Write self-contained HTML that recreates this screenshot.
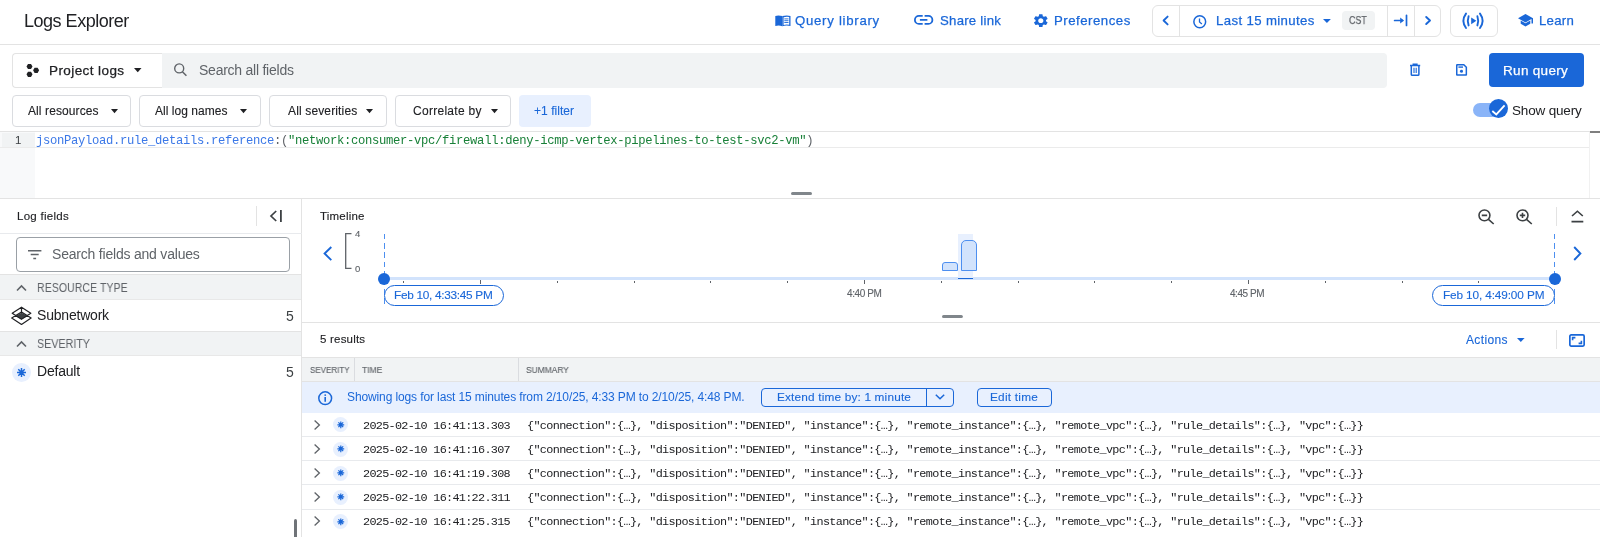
<!DOCTYPE html>
<html><head><meta charset="utf-8">
<style>
*{box-sizing:border-box;margin:0;padding:0}
html,body{-webkit-font-smoothing:antialiased;width:1600px;height:537px;overflow:hidden;background:#fff;font-family:'Liberation Sans',sans-serif;color:#202124;position:relative}
.a{position:absolute}
.t{position:absolute;white-space:nowrap;will-change:transform}
svg{position:absolute;overflow:visible}
</style></head><body>
<div class="a" style="left:0px;top:44px;width:1600px;height:1px;background:#e3e3e3"></div>
<svg style="left:774.8px;top:14.5px;width:15.8px;height:11.5px;" viewBox="0 0 15.8 11.5" preserveAspectRatio="none"><path d="M0.3 0.9Q3.6 -0.2 7.3 1.1V11.2Q3.6 10 0.3 11.1Z" fill="#1a67d8"/><path d="M7.3 1.1Q11.5 -0.2 15.5 0.9V11.1Q11.5 10 7.3 11.2Z" fill="#1a67d8"/><path d="M8.6 2.3Q11.2 1.5 14.2 2V9.7Q11.2 9.2 8.6 9.9Z" fill="#fff"/><path d="M9.3 3.9h4.2M9.3 5.7h4.2M9.3 7.5h4.2" stroke="#1a67d8" stroke-width="0.9"/></svg>
<svg style="left:914px;top:15.2px;width:19.3px;height:9.8px;" viewBox="0 0 19.3 9.8" preserveAspectRatio="none"><path d="M8.7 0.9H4.9a4 4 0 0 0 0 8h3.8M10.6 0.9h3.8a4 4 0 0 1 0 8h-3.8M5.9 4.9h7.5" fill="none" stroke="#1a67d8" stroke-width="1.8"/></svg>
<svg style="left:1034.4px;top:13.75px;width:13.6px;height:13.25px;" viewBox="2.6 2 18.8 20" preserveAspectRatio="none"><path fill="#1a67d8" d="M19.14 12.94c.04-.3.06-.61.06-.94 0-.32-.02-.64-.07-.94l2.03-1.58a.49.49 0 0 0 .12-.61l-1.92-3.32a.488.488 0 0 0-.59-.22l-2.39.96c-.5-.38-1.03-.7-1.62-.94l-.36-2.54a.484.484 0 0 0-.48-.41h-3.84c-.24 0-.43.17-.47.41l-.36 2.54c-.59.24-1.13.57-1.62.94l-2.39-.96c-.22-.08-.47 0-.59.22L2.74 8.87c-.12.21-.08.47.12.61l2.03 1.58c-.05.3-.09.63-.09.94s.02.64.07.94l-2.03 1.58a.49.49 0 0 0-.12.61l1.92 3.32c.12.22.37.29.59.22l2.39-.96c.5.38 1.03.7 1.62.94l.36 2.54c.05.24.24.41.48.41h3.84c.24 0 .44-.17.47-.41l.36-2.54c.59-.24 1.13-.56 1.62-.94l2.39.96c.22.08.47 0 .59-.22l1.92-3.32c.12-.22.07-.47-.12-.61l-2.01-1.58zM12 15.6c-1.98 0-3.6-1.62-3.6-3.6s1.62-3.6 3.6-3.6 3.6 1.62 3.6 3.6-1.62 3.6-3.6 3.6z"/></svg>
<div class="a" style="left:1151.5px;top:5.25px;width:289.5px;height:31.55px;border:1px solid #e3e3e3;border-radius:6px"></div>
<div class="a" style="left:1178.6px;top:5.25px;width:1.0px;height:31.55px;background:#e3e3e3"></div>
<div class="a" style="left:1387px;top:5.25px;width:1px;height:31.55px;background:#e3e3e3"></div>
<div class="a" style="left:1414px;top:5.25px;width:1px;height:31.55px;background:#e3e3e3"></div>
<svg style="left:1160px;top:12px;width:12px;height:18px;" viewBox="0 0 12 18" preserveAspectRatio="none"><path d="M7.6 4.6L3.6 8.5 7.6 12.4" fill="none" stroke="#1a67d8" stroke-width="1.9" stroke-linecap="round" stroke-linejoin="round"/></svg>
<svg style="left:1193px;top:15px;width:13.5px;height:13.5px;" viewBox="0 0 13.5 13.5" preserveAspectRatio="none"><circle cx="6.75" cy="6.75" r="5.9" fill="none" stroke="#1a67d8" stroke-width="1.5"/><path d="M6.5 3.6v3.4l2.4 1.9" fill="none" stroke="#1a67d8" stroke-width="1.3"/></svg>
<svg style="left:1322.75px;top:19.4px;width:7.85px;height:4.1px;" viewBox="0 0 8 4" preserveAspectRatio="none"><path d="M0 0h8L4 4z" fill="#1a67d8"/></svg>
<div class="a" style="left:1341.5px;top:11px;width:33.2px;height:19px;background:#f1f3f4;border-radius:4px"></div>
<svg style="left:1390px;top:12px;width:20px;height:18px;" viewBox="0 0 20 18" preserveAspectRatio="none"><path d="M4.6 8.5H12.5M16.5 3.3V13.4" fill="none" stroke="#1a67d8" stroke-width="1.7" stroke-linecap="round"/><path d="M10.2 5.6L14 8.5 10.2 11.4z" fill="#1a67d8"/></svg>
<svg style="left:1420px;top:12px;width:16px;height:18px;" viewBox="0 0 16 18" preserveAspectRatio="none"><path d="M6.2 5L10 8.5 6.2 12" fill="none" stroke="#1a67d8" stroke-width="1.9" stroke-linecap="round" stroke-linejoin="round"/></svg>
<div class="a" style="left:1449.5px;top:5.3px;width:48.0px;height:31.5px;border:1px solid #e3e3e3;border-radius:6px"></div>
<svg style="left:1460px;top:12px;width:26px;height:18px;" viewBox="0 0 26 18" preserveAspectRatio="none"><path d="M6 1.6Q0.8 8.8 6 16M8.6 4.2Q7 8.8 8.6 13.4M17.4 4.2Q19 8.8 17.4 13.4M20 1.6Q25.2 8.8 20 16" fill="none" stroke="#1a67d8" stroke-width="1.9" stroke-linecap="round"/><path d="M11.2 5.4L16.4 8.8 11.2 12.2z" fill="#1a67d8"/></svg>
<svg style="left:1518px;top:14.3px;width:15px;height:12.7px;" viewBox="0 0 15 12.7" preserveAspectRatio="none"><path d="M7.5 0L0 4.2l7.5 4.2 6-3.4v4.6h1.5V4.2z" fill="#1a67d8"/><path d="M2.7 6.6v3.2L7.5 12.6l4.8-2.8V6.6L7.5 9.3z" fill="#1a67d8"/></svg>
<div class="a" style="left:12.25px;top:52.6px;width:150.75px;height:35.2px;border:1px solid #e3e3e3;border-right:none;border-radius:4px 0 0 4px"></div>
<div class="a" style="left:162.3px;top:52.6px;width:1224.7px;height:35.2px;background:#f1f3f4;border-radius:0 4px 4px 0"></div>
<svg style="left:20px;top:58px;width:30px;height:24px;" viewBox="0 0 30 24" preserveAspectRatio="none"><path d="M6.50 8.50L8.00 5.90L11.00 5.90L12.50 8.50L11.00 11.10L8.00 11.10ZM13.10 12.30L14.60 9.70L17.60 9.70L19.10 12.30L17.60 14.90L14.60 14.90ZM6.50 16.30L8.00 13.70L11.00 13.70L12.50 16.30L11.00 18.90L8.00 18.90Z" fill="#202124"/></svg>
<svg style="left:133.75px;top:68.2px;width:7.5px;height:4.3px;" viewBox="0 0 7.5 4.3" preserveAspectRatio="none"><path d="M0 0h7.5L3.75 4.3z" fill="#202124"/></svg>
<svg style="left:173px;top:62px;width:15px;height:16px;" viewBox="0 0 15 16" preserveAspectRatio="none"><circle cx="6.2" cy="6.4" r="4.5" fill="none" stroke="#5f6368" stroke-width="1.4"/><path d="M9.4 9.7l4 4.1" stroke="#5f6368" stroke-width="1.5"/></svg>
<svg style="left:1409.7px;top:64.2px;width:10.2px;height:11.7px;" viewBox="0 0 10.2 11.7" preserveAspectRatio="none"><path d="M0 1.5h10.2M3.3 1.2V0.3h3.6v0.9" stroke="#1a67d8" stroke-width="1.5" fill="none"/><path d="M1.3 2v8.4a0.9 0.9 0 0 0 .9.9h5.8a0.9 0.9 0 0 0 .9-.9V2" fill="none" stroke="#1a67d8" stroke-width="1.5"/><path d="M4 3.8v5.2M6.2 3.8v5.2" stroke="#1a67d8" stroke-width="1.1"/></svg>
<svg style="left:1455.9px;top:64.2px;width:11.1px;height:11.7px;" viewBox="0 0 11.1 11.7" preserveAspectRatio="none"><path d="M1 0.75h6.8l2.55 2.55v7.4a0.3 0.3 0 0 1-.3.3H1.05a0.3 0.3 0 0 1-.3-.3V1.05a0.3 0.3 0 0 1 .3-.3z" fill="none" stroke="#1a67d8" stroke-width="1.5"/><rect x="2.4" y="2.4" width="4.6" height="1.4" fill="#1a67d8"/><circle cx="5.5" cy="7.3" r="1.5" fill="#1a67d8"/></svg>
<div class="a" style="left:1489px;top:52.75px;width:95px;height:34.45px;background:#1a67d8;border-radius:4px"></div>
<div class="a" style="left:12.25px;top:95.4px;width:118.35px;height:31.3px;border:1px solid #dadce0;border-radius:4px"></div>
<div class="a" style="left:139.4px;top:95.4px;width:121.3px;height:31.3px;border:1px solid #dadce0;border-radius:4px"></div>
<div class="a" style="left:268.5px;top:95.4px;width:118.4px;height:31.3px;border:1px solid #dadce0;border-radius:4px"></div>
<div class="a" style="left:394.5px;top:95.4px;width:116.2px;height:31.3px;border:1px solid #dadce0;border-radius:4px"></div>
<div class="a" style="left:518.8px;top:95.4px;width:72.1px;height:31.3px;background:#e8f0fe;border-radius:4px"></div>
<svg style="left:110.9px;top:108.9px;width:7.0px;height:4.3px;" viewBox="0 0 7 4.3" preserveAspectRatio="none"><path d="M0 0h7L3.5 4.3z" fill="#202124"/></svg>
<svg style="left:240.3px;top:108.9px;width:7.0px;height:4.3px;" viewBox="0 0 7 4.3" preserveAspectRatio="none"><path d="M0 0h7L3.5 4.3z" fill="#202124"/></svg>
<svg style="left:366.2px;top:108.9px;width:7.0px;height:4.3px;" viewBox="0 0 7 4.3" preserveAspectRatio="none"><path d="M0 0h7L3.5 4.3z" fill="#202124"/></svg>
<svg style="left:490.6px;top:108.9px;width:7.0px;height:4.3px;" viewBox="0 0 7 4.3" preserveAspectRatio="none"><path d="M0 0h7L3.5 4.3z" fill="#202124"/></svg>
<div class="a" style="left:1473px;top:102.5px;width:27px;height:14.0px;background:#8ab4f8;border-radius:7px"></div>
<div class="a" style="left:1488.6px;top:99.2px;width:19px;height:19px;border-radius:50%;background:#1a67d8"></div>
<svg style="left:1490px;top:103px;width:16px;height:13px;" viewBox="0 0 16 13" preserveAspectRatio="none"><path d="M2.3 8L6.3 11.4 14.6 2.3" fill="none" stroke="#fff" stroke-width="1.8"/></svg>
<div class="a" style="left:0px;top:131px;width:1600px;height:1.3px;background:#e3e3e3"></div>
<div class="a" style="left:0px;top:132.3px;width:35px;height:65.7px;background:#f8f9fa"></div>
<div class="a" style="left:2px;top:133px;width:33px;height:13.5px;background:#f1f3f4"></div>
<div class="a" style="left:0px;top:146.6px;width:1589px;height:1.4px;background:#ebebeb"></div>
<div class="a" style="left:1589px;top:132px;width:1px;height:66px;background:#f1f1f1"></div>
<div class="a" style="left:1590px;top:131px;width:10px;height:2px;background:#7f7f7f"></div>
<div class="t" style="left:36.2px;top:135px;font-family:'Liberation Mono',monospace;font-size:12.2px;line-height:12.2px;letter-spacing:-0.312px;white-space:pre"><span style="color:#3b78e7">jsonPayload.rule_details.reference</span><span style="color:#5f6368">:(</span><span style="color:#188038">"network:consumer-vpc/firewall:deny-icmp-vertex-pipelines-to-test-svc2-vm"</span><span style="color:#5f6368">)</span></div>
<div class="a" style="left:791px;top:191.5px;width:21px;height:3.0px;background:#80868b;border-radius:2px"></div>
<div class="a" style="left:0px;top:198px;width:1600px;height:1px;background:#e3e3e3"></div>
<div class="a" style="left:301px;top:199px;width:1px;height:338px;background:#e3e3e3"></div>
<div class="a" style="left:256.2px;top:206px;width:1.0px;height:19.6px;background:#e3e3e3"></div>
<svg style="left:268px;top:208px;width:16px;height:16px;" viewBox="0 0 16 16" preserveAspectRatio="none"><path d="M8.2 3L3 8 8.2 13" fill="none" stroke="#3c4043" stroke-width="1.7"/><path d="M12.9 2v12" stroke="#3c4043" stroke-width="1.8"/></svg>
<div class="a" style="left:0px;top:233px;width:302px;height:1px;background:#e8eaed"></div>
<div class="a" style="left:16px;top:237.2px;width:273.5px;height:34.8px;border:1px solid #9aa0a6;border-radius:4px"></div>
<svg style="left:27.6px;top:250px;width:13.4px;height:9.2px;" viewBox="0 0 13.4 9.2" preserveAspectRatio="none"><path d="M0 0.8h13.4M2.7 4.6h8M5.3 8.4h2.8" stroke="#5f6368" stroke-width="1.5"/></svg>
<div class="a" style="left:0px;top:274px;width:301px;height:25.5px;background:#f1f3f4;border-top:1px solid #e3e3e3;border-bottom:1px solid #e8e8e8"></div>
<div class="a" style="left:0px;top:330.5px;width:301px;height:25.6px;background:#f1f3f4;border-top:1px solid #e3e3e3;border-bottom:1px solid #e8e8e8"></div>
<svg style="left:16px;top:284.5px;width:11px;height:6.1px;" viewBox="0 0 11 6.1" preserveAspectRatio="none"><path d="M1 5.5L5.5 1 10 5.5" fill="none" stroke="#5f6368" stroke-width="1.6"/></svg>
<svg style="left:16px;top:341px;width:11px;height:6.1px;" viewBox="0 0 11 6.1" preserveAspectRatio="none"><path d="M1 5.5L5.5 1 10 5.5" fill="none" stroke="#5f6368" stroke-width="1.6"/></svg>
<svg style="left:10px;top:305px;width:22px;height:21px;" viewBox="0 0 22 21" preserveAspectRatio="none"><path d="M11.50 7.80 L17.80 10.90 L11.50 14.30 L5.20 10.90z" fill="#3c4043"/><path d="M11.50 2.20 L20.80 8.30 L11.50 14.30 L2.20 8.30zM11.50 6.90 L21.10 13.10 L11.50 19.40 L1.70 13.10zM11.5 2.2V8" fill="none" stroke="#202124" stroke-width="1.2" stroke-linejoin="round"/></svg>
<div class="a" style="left:11.6px;top:362.5px;width:19.4px;height:19.4px;border-radius:50%;background:#e8f0fe"></div>
<svg style="left:15.8px;top:366.7px;width:11.0px;height:11.0px;" viewBox="0 0 11 11" preserveAspectRatio="none"><path d="M5.5 1v9M1 5.5h9M2.3 2.3l6.4 6.4M2.3 8.7l6.4-6.4" stroke="#1a67d8" stroke-width="1.5"/><circle cx="5.5" cy="5.5" r="1.6" fill="#1a67d8"/></svg>
<div class="a" style="left:293.8px;top:518.7px;width:3.2px;height:21.3px;background:#6f7378;border-radius:2px"></div>
<svg style="left:322.8px;top:245.8px;width:9.5px;height:15.1px;" viewBox="0 0 9.5 15.1" preserveAspectRatio="none"><path d="M8.3 1L1.6 7.55 8.3 14.1" fill="none" stroke="#1a67d8" stroke-width="1.9"/></svg>
<svg style="left:344.6px;top:232.8px;width:6.9px;height:35.9px;" viewBox="0 0 6.9 35.9" preserveAspectRatio="none"><path d="M6.5 0.6H0.7V35.3H6.5" fill="none" stroke="#5f6368" stroke-width="1.3"/></svg>
<div class="a" style="left:384px;top:276.7px;width:1170.7px;height:3.4px;background:#d2e3fc"></div>
<div class="a" style="left:403.2px;top:281.2px;width:1.1px;height:2.0px;background:#5f6368"></div>
<div class="a" style="left:480.0px;top:280.3px;width:1.1px;height:3.9px;background:#5f6368"></div>
<div class="a" style="left:556.8px;top:281.2px;width:1.1px;height:2.0px;background:#5f6368"></div>
<div class="a" style="left:633.6px;top:281.2px;width:1.1px;height:2.0px;background:#5f6368"></div>
<div class="a" style="left:710.4px;top:281.2px;width:1.1px;height:2.0px;background:#5f6368"></div>
<div class="a" style="left:787.2px;top:281.2px;width:1.1px;height:2.0px;background:#5f6368"></div>
<div class="a" style="left:864.0px;top:280.3px;width:1.1px;height:3.9px;background:#5f6368"></div>
<div class="a" style="left:940.8px;top:281.2px;width:1.1px;height:2.0px;background:#5f6368"></div>
<div class="a" style="left:1017.6px;top:281.2px;width:1.1px;height:2.0px;background:#5f6368"></div>
<div class="a" style="left:1094.4px;top:281.2px;width:1.1px;height:2.0px;background:#5f6368"></div>
<div class="a" style="left:1171.1999999999998px;top:281.2px;width:1.1px;height:2.0px;background:#5f6368"></div>
<div class="a" style="left:1248.0px;top:280.3px;width:1.1px;height:3.9px;background:#5f6368"></div>
<div class="a" style="left:1324.8px;top:281.2px;width:1.1px;height:2.0px;background:#5f6368"></div>
<div class="a" style="left:1401.6px;top:281.2px;width:1.1px;height:2.0px;background:#5f6368"></div>
<div class="a" style="left:1478.4px;top:281.2px;width:1.1px;height:2.0px;background:#5f6368"></div>
<div class="a" style="left:957.5px;top:234px;width:15.1px;height:44px;background:#e8f0fe"></div>
<div class="a" style="left:957.5px;top:277.5px;width:15.1px;height:1.7px;background:#1a67d8"></div>
<div class="a" style="left:942px;top:262.3px;width:15.5px;height:8.3px;background:#d2e3fc;border:1.2px solid #4d8ff0;border-radius:3px 3px 0 0"></div>
<div class="a" style="left:961.3px;top:239.5px;width:15.8px;height:31.1px;background:#d2e3fc;border:1.2px solid #4d8ff0;border-radius:5px 5px 0 0"></div>
<div class="a" style="left:383.55px;top:234px;width:1.3px;height:72px;background:repeating-linear-gradient(to bottom,#4d8ff0 0 5.4px,transparent 5.4px 9.2px)"></div>
<div class="a" style="left:1554.05px;top:234px;width:1.3px;height:72px;background:repeating-linear-gradient(to bottom,#4d8ff0 0 5.4px,transparent 5.4px 9.2px)"></div>
<div class="a" style="left:383.9px;top:284.8px;width:119.8px;height:20.9px;background:#fff;border:1.2px solid #1a67d8;border-radius:11px"></div>
<div class="a" style="left:1432.2px;top:284.7px;width:122.8px;height:21.1px;background:#fff;border:1.2px solid #1a67d8;border-radius:11px"></div>
<div class="a" style="left:378.2px;top:272.5px;width:12px;height:12px;border-radius:50%;background:#1a67d8"></div>
<div class="a" style="left:1548.7px;top:272.5px;width:12px;height:12px;border-radius:50%;background:#1a67d8"></div>
<svg style="left:1477.5px;top:209px;width:16.9px;height:15.7px;" viewBox="0 0 17 16" preserveAspectRatio="none"><circle cx="6.5" cy="6.5" r="5.5" fill="none" stroke="#3c4043" stroke-width="1.6"/><path d="M10.5 10.5l5.3 4.8M3.8 6.5h5.4" stroke="#3c4043" stroke-width="1.6"/></svg>
<svg style="left:1516px;top:209px;width:17px;height:15.7px;" viewBox="0 0 17 16" preserveAspectRatio="none"><circle cx="6.5" cy="6.5" r="5.5" fill="none" stroke="#3c4043" stroke-width="1.6"/><path d="M10.5 10.5l5.3 4.8M3.8 6.5h5.4M6.5 3.8v5.4" stroke="#3c4043" stroke-width="1.6"/></svg>
<div class="a" style="left:1555.5px;top:207px;width:1.0px;height:19px;background:#e3e3e3"></div>
<svg style="left:1571px;top:210px;width:12.75px;height:12.5px;" viewBox="0 0 12.75 12.5" preserveAspectRatio="none"><path d="M1 6L6.4 1.2 11.8 6M0.5 11.6h11.8" fill="none" stroke="#3c4043" stroke-width="1.6"/></svg>
<svg style="left:1572.5px;top:245.6px;width:8.5px;height:15.0px;" viewBox="0 0 8.5 15" preserveAspectRatio="none"><path d="M1.2 1L7.4 7.5 1.2 14" fill="none" stroke="#1a67d8" stroke-width="1.9"/></svg>
<svg style="left:941.7px;top:314.8px;width:20.9px;height:3.0px;" viewBox="0 0 21 3" preserveAspectRatio="none"><rect x="0" y="0" width="21" height="3" rx="1.5" fill="#80868b"/></svg>
<div class="a" style="left:302px;top:322px;width:1298px;height:1px;background:#e3e3e3"></div>
<svg style="left:1516.6px;top:337.8px;width:7.6px;height:4.1px;" viewBox="0 0 7.6 4.1" preserveAspectRatio="none"><path d="M0 0h7.6L3.8 4.1z" fill="#1a67d8"/></svg>
<div class="a" style="left:1556px;top:330px;width:1px;height:18.8px;background:#e3e3e3"></div>
<svg style="left:1569px;top:334px;width:16px;height:13px;" viewBox="0 0 16 13" preserveAspectRatio="none"><rect x="0.85" y="0.85" width="14.3" height="11.3" rx="1.3" fill="none" stroke="#1a67d8" stroke-width="1.7"/><path d="M3.6 6.2V3.6h2.8M12.4 6.8v2.6H9.6" fill="none" stroke="#1a67d8" stroke-width="1.6"/></svg>
<div class="a" style="left:302px;top:357px;width:1298px;height:25px;background:#f1f3f4;border-top:1px solid #e3e3e3;border-bottom:1px solid #e3e3e3"></div>
<div class="a" style="left:354.2px;top:358px;width:1.0px;height:23px;background:#dadce0"></div>
<div class="a" style="left:518px;top:358px;width:1px;height:23px;background:#dadce0"></div>
<div class="a" style="left:302px;top:381.6px;width:1298px;height:31.4px;background:#e8f0fe"></div>
<svg style="left:317.9px;top:390.5px;width:14.4px;height:14.4px;" viewBox="0 0 14.4 14.4" preserveAspectRatio="none"><circle cx="7.2" cy="7.2" r="6.4" fill="none" stroke="#1a67d8" stroke-width="1.5"/><path d="M7.2 6v4.8" stroke="#1a67d8" stroke-width="1.6"/><circle cx="7.2" cy="4.1" r="0.9" fill="#1a67d8"/></svg>
<div class="a" style="left:761px;top:388px;width:192.6px;height:18.6px;border:1px solid #1a67d8;border-radius:4px"></div>
<div class="a" style="left:926px;top:388px;width:1px;height:18.6px;background:#1a67d8"></div>
<svg style="left:935px;top:394.4px;width:10px;height:5.6px;" viewBox="0 0 10 5.6" preserveAspectRatio="none"><path d="M0.8 0.8L5 4.8 9.2 0.8" fill="none" stroke="#1a67d8" stroke-width="1.5"/></svg>
<div class="a" style="left:977px;top:388px;width:74.6px;height:18.6px;border:1px solid #1a67d8;border-radius:4px"></div>
<div class="a" style="left:302px;top:436.2px;width:1298px;height:1.0px;background:#e8eaed"></div>
<svg style="left:313px;top:419.0px;width:9px;height:12.0px;" viewBox="0 0 9 12" preserveAspectRatio="none"><path d="M1.6 1.5L6.4 6 1.6 10.5" fill="none" stroke="#5f6368" stroke-width="1.3"/></svg>
<div class="a" style="left:332.7px;top:417.4px;width:15px;height:15px;border-radius:50%;background:#e8f0fe"></div>
<svg style="left:337px;top:421.1px;width:7.6px;height:7.6px;" viewBox="0 0 7.6 7.6" preserveAspectRatio="none"><path d="M3.8 0.4v6.8M0.4 3.8h6.8M1.4 1.4l4.8 4.8M1.4 6.2l4.8-4.8" stroke="#1a67d8" stroke-width="1.2"/><circle cx="3.8" cy="3.8" r="1.5" fill="#1a67d8"/></svg>
<div class="a" style="left:302px;top:460.3px;width:1298px;height:1.0px;background:#e8eaed"></div>
<svg style="left:313px;top:443.1px;width:9px;height:12.0px;" viewBox="0 0 9 12" preserveAspectRatio="none"><path d="M1.6 1.5L6.4 6 1.6 10.5" fill="none" stroke="#5f6368" stroke-width="1.3"/></svg>
<div class="a" style="left:332.7px;top:441.5px;width:15px;height:15px;border-radius:50%;background:#e8f0fe"></div>
<svg style="left:337px;top:445.20000000000005px;width:7.6px;height:7.6px;" viewBox="0 0 7.6 7.6" preserveAspectRatio="none"><path d="M3.8 0.4v6.8M0.4 3.8h6.8M1.4 1.4l4.8 4.8M1.4 6.2l4.8-4.8" stroke="#1a67d8" stroke-width="1.2"/><circle cx="3.8" cy="3.8" r="1.5" fill="#1a67d8"/></svg>
<div class="a" style="left:302px;top:484.4px;width:1298px;height:1.0px;background:#e8eaed"></div>
<svg style="left:313px;top:467.2px;width:9px;height:12.0px;" viewBox="0 0 9 12" preserveAspectRatio="none"><path d="M1.6 1.5L6.4 6 1.6 10.5" fill="none" stroke="#5f6368" stroke-width="1.3"/></svg>
<div class="a" style="left:332.7px;top:465.59999999999997px;width:15px;height:15px;border-radius:50%;background:#e8f0fe"></div>
<svg style="left:337px;top:469.3px;width:7.6px;height:7.6px;" viewBox="0 0 7.6 7.6" preserveAspectRatio="none"><path d="M3.8 0.4v6.8M0.4 3.8h6.8M1.4 1.4l4.8 4.8M1.4 6.2l4.8-4.8" stroke="#1a67d8" stroke-width="1.2"/><circle cx="3.8" cy="3.8" r="1.5" fill="#1a67d8"/></svg>
<div class="a" style="left:302px;top:508.5px;width:1298px;height:1.0px;background:#e8eaed"></div>
<svg style="left:313px;top:491.3px;width:9px;height:12.0px;" viewBox="0 0 9 12" preserveAspectRatio="none"><path d="M1.6 1.5L6.4 6 1.6 10.5" fill="none" stroke="#5f6368" stroke-width="1.3"/></svg>
<div class="a" style="left:332.7px;top:489.7px;width:15px;height:15px;border-radius:50%;background:#e8f0fe"></div>
<svg style="left:337px;top:493.40000000000003px;width:7.6px;height:7.6px;" viewBox="0 0 7.6 7.6" preserveAspectRatio="none"><path d="M3.8 0.4v6.8M0.4 3.8h6.8M1.4 1.4l4.8 4.8M1.4 6.2l4.8-4.8" stroke="#1a67d8" stroke-width="1.2"/><circle cx="3.8" cy="3.8" r="1.5" fill="#1a67d8"/></svg>
<svg style="left:313px;top:515.4px;width:9px;height:12.0px;" viewBox="0 0 9 12" preserveAspectRatio="none"><path d="M1.6 1.5L6.4 6 1.6 10.5" fill="none" stroke="#5f6368" stroke-width="1.3"/></svg>
<div class="a" style="left:332.7px;top:513.8px;width:15px;height:15px;border-radius:50%;background:#e8f0fe"></div>
<svg style="left:337px;top:517.5px;width:7.6px;height:7.6px;" viewBox="0 0 7.6 7.6" preserveAspectRatio="none"><path d="M3.8 0.4v6.8M0.4 3.8h6.8M1.4 1.4l4.8 4.8M1.4 6.2l4.8-4.8" stroke="#1a67d8" stroke-width="1.2"/><circle cx="3.8" cy="3.8" r="1.5" fill="#1a67d8"/></svg>
<div class="t" style="left:23.8px;top:12px;font-size:18px;line-height:18px;color:#202124;font-weight:400;font-family:'Liberation Sans',sans-serif;letter-spacing:-0.485px;">Logs Explorer</div>
<div class="t" style="left:795.2px;top:14px;font-size:13.2px;line-height:13.2px;color:#1a67d8;font-weight:400;font-family:'Liberation Sans',sans-serif;letter-spacing:0.722px;-webkit-text-stroke:0.25px #1a67d8;">Query library</div>
<div class="t" style="left:939.5px;top:14px;font-size:13.2px;line-height:13.2px;color:#1a67d8;font-weight:400;font-family:'Liberation Sans',sans-serif;letter-spacing:0.248px;-webkit-text-stroke:0.25px #1a67d8;">Share link</div>
<div class="t" style="left:1054.25px;top:14px;font-size:13.2px;line-height:13.2px;color:#1a67d8;font-weight:400;font-family:'Liberation Sans',sans-serif;letter-spacing:0.514px;-webkit-text-stroke:0.25px #1a67d8;">Preferences</div>
<div class="t" style="left:1216.0px;top:14px;font-size:13.2px;line-height:13.2px;color:#1a67d8;font-weight:400;font-family:'Liberation Sans',sans-serif;letter-spacing:0.373px;-webkit-text-stroke:0.25px #1a67d8;">Last 15 minutes</div>
<div class="t" style="left:1348.5px;top:15px;font-size:10.5px;line-height:10.5px;color:#5f6368;font-weight:400;font-family:'Liberation Sans',sans-serif;letter-spacing:0px;-webkit-text-stroke:0.25px #5f6368;transform:scaleX(0.8476);transform-origin:0 0;">CST</div>
<div class="t" style="left:1538.7px;top:14px;font-size:13.2px;line-height:13.2px;color:#1a67d8;font-weight:400;font-family:'Liberation Sans',sans-serif;letter-spacing:0.283px;-webkit-text-stroke:0.25px #1a67d8;">Learn</div>
<div class="t" style="left:48.9px;top:64px;font-size:13.5px;line-height:13.5px;color:#202124;font-weight:400;font-family:'Liberation Sans',sans-serif;letter-spacing:0.415px;-webkit-text-stroke:0.25px #202124;">Project logs</div>
<div class="t" style="left:199.25px;top:63px;font-size:14px;line-height:14px;color:#5f6368;font-weight:400;font-family:'Liberation Sans',sans-serif;letter-spacing:-0.244px;">Search all fields</div>
<div class="t" style="left:1503.4px;top:64px;font-size:13.5px;line-height:13.5px;color:#ffffff;font-weight:400;font-family:'Liberation Sans',sans-serif;letter-spacing:0.319px;-webkit-text-stroke:0.25px #ffffff;">Run query</div>
<div class="t" style="left:27.9px;top:105px;font-size:12px;line-height:12px;color:#202124;font-weight:400;font-family:'Liberation Sans',sans-serif;letter-spacing:0.099px;-webkit-text-stroke:0.12px #202124;">All resources</div>
<div class="t" style="left:155.4px;top:105px;font-size:12px;line-height:12px;color:#202124;font-weight:400;font-family:'Liberation Sans',sans-serif;letter-spacing:0.037px;-webkit-text-stroke:0.12px #202124;">All log names</div>
<div class="t" style="left:287.5px;top:105px;font-size:12px;line-height:12px;color:#202124;font-weight:400;font-family:'Liberation Sans',sans-serif;letter-spacing:0.144px;-webkit-text-stroke:0.12px #202124;">All severities</div>
<div class="t" style="left:412.9px;top:105px;font-size:12px;line-height:12px;color:#202124;font-weight:400;font-family:'Liberation Sans',sans-serif;letter-spacing:0.282px;-webkit-text-stroke:0.12px #202124;">Correlate by</div>
<div class="t" style="left:534.25px;top:105px;font-size:12px;line-height:12px;color:#1a67d8;font-weight:400;font-family:'Liberation Sans',sans-serif;letter-spacing:0.049px;-webkit-text-stroke:0.12px #1a67d8;">+1 filter</div>
<div class="t" style="left:1511.8px;top:104px;font-size:13.5px;line-height:13.5px;color:#202124;font-weight:400;font-family:'Liberation Sans',sans-serif;letter-spacing:-0.167px;">Show query</div>
<div class="t" style="left:14.8px;top:135px;font-size:11.5px;line-height:11.5px;color:#3c4043;font-weight:400;font-family:'Liberation Sans',sans-serif;letter-spacing:0px;">1</div>
<div class="t" style="left:17.2px;top:211px;font-size:11.5px;line-height:11.5px;color:#202124;font-weight:400;font-family:'Liberation Sans',sans-serif;letter-spacing:0.271px;-webkit-text-stroke:0.12px #202124;">Log fields</div>
<div class="t" style="left:52.2px;top:247px;font-size:14px;line-height:14px;color:#5f6368;font-weight:400;font-family:'Liberation Sans',sans-serif;letter-spacing:-0.206px;">Search fields and values</div>
<div class="t" style="left:36.5px;top:282px;font-size:12px;line-height:12px;color:#5f6368;font-weight:400;font-family:'Liberation Sans',sans-serif;letter-spacing:0px;transform:scaleX(0.8843);transform-origin:0 0;">RESOURCE TYPE</div>
<div class="t" style="left:36.5px;top:338px;font-size:12px;line-height:12px;color:#5f6368;font-weight:400;font-family:'Liberation Sans',sans-serif;letter-spacing:0px;transform:scaleX(0.893);transform-origin:0 0;">SEVERITY</div>
<div class="t" style="left:36.5px;top:308px;font-size:14px;line-height:14px;color:#202124;font-weight:400;font-family:'Liberation Sans',sans-serif;letter-spacing:-0.203px;">Subnetwork</div>
<div class="t" style="left:286.3px;top:309px;font-size:14px;line-height:14px;color:#3c4043;font-weight:400;font-family:'Liberation Sans',sans-serif;letter-spacing:0px;">5</div>
<div class="t" style="left:36.5px;top:364px;font-size:14px;line-height:14px;color:#202124;font-weight:400;font-family:'Liberation Sans',sans-serif;letter-spacing:-0.209px;">Default</div>
<div class="t" style="left:286.3px;top:365px;font-size:14px;line-height:14px;color:#3c4043;font-weight:400;font-family:'Liberation Sans',sans-serif;letter-spacing:0px;">5</div>
<div class="t" style="left:319.8px;top:211px;font-size:11.5px;line-height:11.5px;color:#202124;font-weight:400;font-family:'Liberation Sans',sans-serif;letter-spacing:0.209px;-webkit-text-stroke:0.12px #202124;">Timeline</div>
<div class="t" style="left:354.9px;top:229px;font-size:9.5px;line-height:9.5px;color:#5f6368;font-weight:400;font-family:'Liberation Sans',sans-serif;letter-spacing:0px;-webkit-text-stroke:0.12px #5f6368;">4</div>
<div class="t" style="left:354.9px;top:264px;font-size:9.5px;line-height:9.5px;color:#5f6368;font-weight:400;font-family:'Liberation Sans',sans-serif;letter-spacing:0px;-webkit-text-stroke:0.12px #5f6368;">0</div>
<div class="t" style="left:846.5px;top:289px;font-size:10px;line-height:10px;color:#5f6368;font-weight:400;font-family:'Liberation Sans',sans-serif;letter-spacing:-0.391px;-webkit-text-stroke:0.12px #5f6368;">4:40 PM</div>
<div class="t" style="left:1230.1px;top:289px;font-size:10px;line-height:10px;color:#5f6368;font-weight:400;font-family:'Liberation Sans',sans-serif;letter-spacing:-0.437px;-webkit-text-stroke:0.12px #5f6368;">4:45 PM</div>
<div class="t" style="left:394.0px;top:290px;font-size:11.8px;line-height:11.8px;color:#1a67d8;font-weight:400;font-family:'Liberation Sans',sans-serif;letter-spacing:-0.287px;-webkit-text-stroke:0.12px #1a67d8;">Feb 10, 4:33:45 PM</div>
<div class="t" style="left:1442.5px;top:290px;font-size:11.8px;line-height:11.8px;color:#1a67d8;font-weight:400;font-family:'Liberation Sans',sans-serif;letter-spacing:-0.127px;-webkit-text-stroke:0.12px #1a67d8;">Feb 10, 4:49:00 PM</div>
<div class="t" style="left:319.8px;top:334px;font-size:11.5px;line-height:11.5px;color:#202124;font-weight:400;font-family:'Liberation Sans',sans-serif;letter-spacing:0.204px;-webkit-text-stroke:0.12px #202124;">5 results</div>
<div class="t" style="left:1466.3px;top:334px;font-size:12px;line-height:12px;color:#1a67d8;font-weight:400;font-family:'Liberation Sans',sans-serif;letter-spacing:0.346px;-webkit-text-stroke:0.12px #1a67d8;">Actions</div>
<div class="t" style="left:309.5px;top:366px;font-size:9px;line-height:9px;color:#5f6368;font-weight:400;font-family:'Liberation Sans',sans-serif;letter-spacing:0px;-webkit-text-stroke:0.12px #5f6368;transform:scaleX(0.8896);transform-origin:0 0;">SEVERITY</div>
<div class="t" style="left:362.2px;top:366px;font-size:9px;line-height:9px;color:#5f6368;font-weight:400;font-family:'Liberation Sans',sans-serif;letter-spacing:0px;-webkit-text-stroke:0.12px #5f6368;transform:scaleX(0.9443);transform-origin:0 0;">TIME</div>
<div class="t" style="left:526.2px;top:366px;font-size:9px;line-height:9px;color:#5f6368;font-weight:400;font-family:'Liberation Sans',sans-serif;letter-spacing:0px;-webkit-text-stroke:0.12px #5f6368;transform:scaleX(0.9359);transform-origin:0 0;">SUMMARY</div>
<div class="t" style="left:346.9px;top:391px;font-size:12px;line-height:12px;color:#1a67d8;font-weight:400;font-family:'Liberation Sans',sans-serif;letter-spacing:-0.116px;">Showing logs for last 15 minutes from 2/10/25, 4:33 PM to 2/10/25, 4:48 PM.</div>
<div class="t" style="left:776.5px;top:392px;font-size:11.8px;line-height:11.8px;color:#1a67d8;font-weight:400;font-family:'Liberation Sans',sans-serif;letter-spacing:0.177px;-webkit-text-stroke:0.12px #1a67d8;">Extend time by: 1 minute</div>
<div class="t" style="left:989.5px;top:392px;font-size:11.8px;line-height:11.8px;color:#1a67d8;font-weight:400;font-family:'Liberation Sans',sans-serif;letter-spacing:0.248px;-webkit-text-stroke:0.12px #1a67d8;">Edit time</div>
<div class="t" style="left:362.5px;top:421px;font-size:11.8px;line-height:11.8px;color:#202124;font-weight:400;font-family:'Liberation Mono',monospace;letter-spacing:-0.69px;">2025-02-10 16:41:13.303</div>
<div class="t" style="left:527.2px;top:421px;font-size:11.8px;line-height:11.8px;color:#202124;font-weight:400;font-family:'Liberation Mono',monospace;letter-spacing:-0.647px;">{"connection":{…}, "disposition":"DENIED", "instance":{…}, "remote_instance":{…}, "remote_vpc":{…}, "rule_details":{…}, "vpc":{…}}</div>
<div class="t" style="left:362.5px;top:445px;font-size:11.8px;line-height:11.8px;color:#202124;font-weight:400;font-family:'Liberation Mono',monospace;letter-spacing:-0.69px;">2025-02-10 16:41:16.307</div>
<div class="t" style="left:527.2px;top:445px;font-size:11.8px;line-height:11.8px;color:#202124;font-weight:400;font-family:'Liberation Mono',monospace;letter-spacing:-0.647px;">{"connection":{…}, "disposition":"DENIED", "instance":{…}, "remote_instance":{…}, "remote_vpc":{…}, "rule_details":{…}, "vpc":{…}}</div>
<div class="t" style="left:362.5px;top:469px;font-size:11.8px;line-height:11.8px;color:#202124;font-weight:400;font-family:'Liberation Mono',monospace;letter-spacing:-0.69px;">2025-02-10 16:41:19.308</div>
<div class="t" style="left:527.2px;top:469px;font-size:11.8px;line-height:11.8px;color:#202124;font-weight:400;font-family:'Liberation Mono',monospace;letter-spacing:-0.647px;">{"connection":{…}, "disposition":"DENIED", "instance":{…}, "remote_instance":{…}, "remote_vpc":{…}, "rule_details":{…}, "vpc":{…}}</div>
<div class="t" style="left:362.5px;top:493px;font-size:11.8px;line-height:11.8px;color:#202124;font-weight:400;font-family:'Liberation Mono',monospace;letter-spacing:-0.69px;">2025-02-10 16:41:22.311</div>
<div class="t" style="left:527.2px;top:493px;font-size:11.8px;line-height:11.8px;color:#202124;font-weight:400;font-family:'Liberation Mono',monospace;letter-spacing:-0.647px;">{"connection":{…}, "disposition":"DENIED", "instance":{…}, "remote_instance":{…}, "remote_vpc":{…}, "rule_details":{…}, "vpc":{…}}</div>
<div class="t" style="left:362.5px;top:517px;font-size:11.8px;line-height:11.8px;color:#202124;font-weight:400;font-family:'Liberation Mono',monospace;letter-spacing:-0.69px;">2025-02-10 16:41:25.315</div>
<div class="t" style="left:527.2px;top:517px;font-size:11.8px;line-height:11.8px;color:#202124;font-weight:400;font-family:'Liberation Mono',monospace;letter-spacing:-0.647px;">{"connection":{…}, "disposition":"DENIED", "instance":{…}, "remote_instance":{…}, "remote_vpc":{…}, "rule_details":{…}, "vpc":{…}}</div>
</body></html>
